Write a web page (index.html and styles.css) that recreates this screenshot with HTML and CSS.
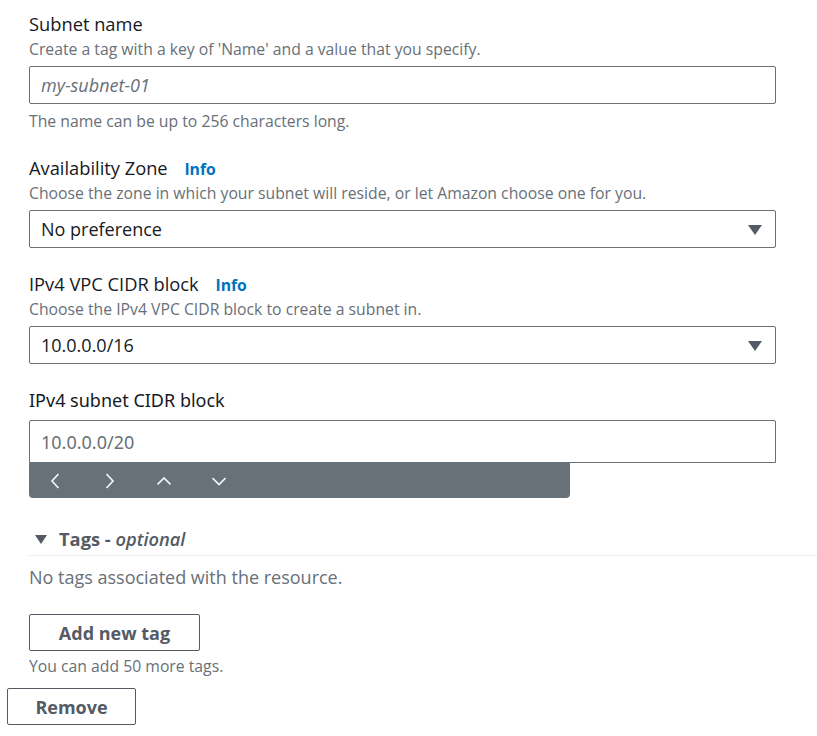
FILE: index.html
```html
<!DOCTYPE html>
<html>
<head>
<meta charset="utf-8">
<link rel="stylesheet" href="styles.css">
</head>
<body>
<div class="page">
  <div class="fields">
    <div class="field f1">
      <div class="label">Subnet name</div>
      <div class="desc">Create a tag with a key of 'Name' and a value that you specify.</div>
      <div class="input"><span class="placeholder italic">my-subnet-01</span></div>
      <div class="hint">The name can be up to 256 characters long.</div>
    </div>
    <div class="field f2">
      <div class="label">Availability Zone <a class="info">Info</a></div>
      <div class="desc">Choose the zone in which your subnet will reside, or let Amazon choose one for you.</div>
      <div class="input select"><span class="value">No preference</span>
        <svg class="caret" width="14" height="10" viewBox="0 0 14 10"><polygon points="0,0 14,0 7,10" fill="#545b64"/></svg>
      </div>
    </div>
    <div class="field f3">
      <div class="label">IPv4 VPC CIDR block <a class="info">Info</a></div>
      <div class="desc">Choose the IPv4 VPC CIDR block to create a subnet in.</div>
      <div class="input select"><span class="value">10.0.0.0/16</span>
        <svg class="caret" width="14" height="10" viewBox="0 0 14 10"><polygon points="0,0 14,0 7,10" fill="#545b64"/></svg>
      </div>
    </div>
    <div class="field f4">
      <div class="label alt">IPv4 subnet CIDR block</div>
      <div class="input cidr"><span class="placeholder alt">10.0.0.0/20</span></div>
      <div class="stepper">
        <svg width="14" height="16" viewBox="0 0 14 16"><polyline points="10.5,1 4,8 10.5,15" fill="none" stroke="#f2f3f3" stroke-width="1.7"/></svg>
        <svg width="14" height="16" viewBox="0 0 14 16"><polyline points="3.5,1 10,8 3.5,15" fill="none" stroke="#f2f3f3" stroke-width="1.7"/></svg>
        <svg width="14" height="16" viewBox="0 0 14 16"><polyline points="0.5,11.5 7,5 13.5,11.5" fill="none" stroke="#f2f3f3" stroke-width="1.7"/></svg>
        <svg width="14" height="16" viewBox="0 0 14 16"><polyline points="0.5,5 7,11.5 13.5,5" fill="none" stroke="#f2f3f3" stroke-width="1.7"/></svg>
      </div>
    </div>
    <div class="tags">
      <div class="tags-head">
        <svg class="tri" width="12" height="9" viewBox="0 0 12 9"><polygon points="0,0 12,0 6,9" fill="#545b64"/></svg>
        <span class="tags-title">Tags - <em>optional</em></span>
      </div>
      <div class="tags-body">
        <div class="empty">No tags associated with the resource.</div>
        <button class="btn add">Add new tag</button>
        <div class="hint small">You can add 50 more tags.</div>
      </div>
    </div>
  </div>
  <button class="btn remove">Remove</button>
</div>
</body>
</html>
```
FILE: styles.css
```css
* { box-sizing: border-box; }
html, body { margin: 0; padding: 0; background: #fff; }
body {
  font-family: "Open Sans", "Noto Sans", sans-serif;
  color: #16191f;
  width: 817px;
  height: 736px;
  overflow: hidden;
}
.page {
  padding: 13px 0 0 7px;
  display: flex;
  flex-direction: column;
}
.fields {
  padding-left: 22px;
  display: flex;
  flex-direction: column;
}
.field { display: flex; flex-direction: column; width: 747px; }
.f2 { margin-top: 26px; }
.f3 { margin-top: 25px; }
.f4 { margin-top: 25px; }
.label {
  font-size: 18.3px;
  line-height: 22px;
  height: 22px;
  color: #16191f;
  white-space: nowrap;
}
.label.alt { font-size: 18px; }
.label.alt, .placeholder.alt { font-family: "Noto Sans", "Open Sans", sans-serif; }
.info {
  font-size: 15.75px;
  font-weight: 700;
  color: #0073bb;
  margin-left: 12px;
}
.desc {
  margin-top: 4px;
  font-size: 15.75px;
  line-height: 20px;
  color: #687078;
  white-space: nowrap;
}
.hint {
  margin-top: 7px;
  font-size: 15.75px;
  line-height: 20px;
  color: #687078;
}
.input {
  margin-top: 7px;
  height: 38px;
  border: 1px solid #687078;
  border-radius: 2px;
  display: flex;
  align-items: center;
  padding: 0 11px;
  font-size: 18px;
}
.select { justify-content: space-between; padding-right: 13px; }
.placeholder { color: #687078; }
.italic { font-style: italic; }
.value { color: #16191f; }
.caret { display: block; margin-top: 1px; }
.cidr {
  margin-top: 9px;
  height: 43px;
  border-radius: 2px 2px 0 0;
  color: #687078;
}
.stepper {
  width: 541px;
  height: 35px;
  background: #687078;
  border-radius: 0 0 4px 4px;
  display: flex;
  align-items: center;
  padding-left: 19px;
  gap: 40.5px;
}
.stepper svg { display: block; }
.tags { margin-top: 30px; display: flex; flex-direction: column; }
.tags-head {
  display: flex;
  align-items: center;
  height: 28px;
  padding-bottom: 5px;
  padding-left: 6px;
  border-bottom: 1px solid #eaeded;
}
.tri { display: block; margin-right: 12px; margin-top: 1px; }
.tags-title {
  font-size: 18.3px;
  font-weight: 700;
  color: #545b64;
  line-height: 22px;
}
.tags-title em { font-weight: 600; }
.tags-body { display: flex; flex-direction: column; align-items: flex-start; }
.empty {
  margin-top: 10px;
  font-size: 18px;
  line-height: 22px;
  color: #687078;
}
.btn {
  font-family: "Open Sans", "Noto Sans", sans-serif;
  font-size: 18px;
  font-weight: 700;
  color: #545b64;
  background: #fff;
  border: 1px solid #545b64;
  border-radius: 2px;
  padding: 0;
  height: 37px;
  cursor: pointer;
}
.add { width: 171px; margin-top: 26px; }
.hint.small { margin-top: 5px; }
.remove { width: 129px; margin-top: 12px; }
```
